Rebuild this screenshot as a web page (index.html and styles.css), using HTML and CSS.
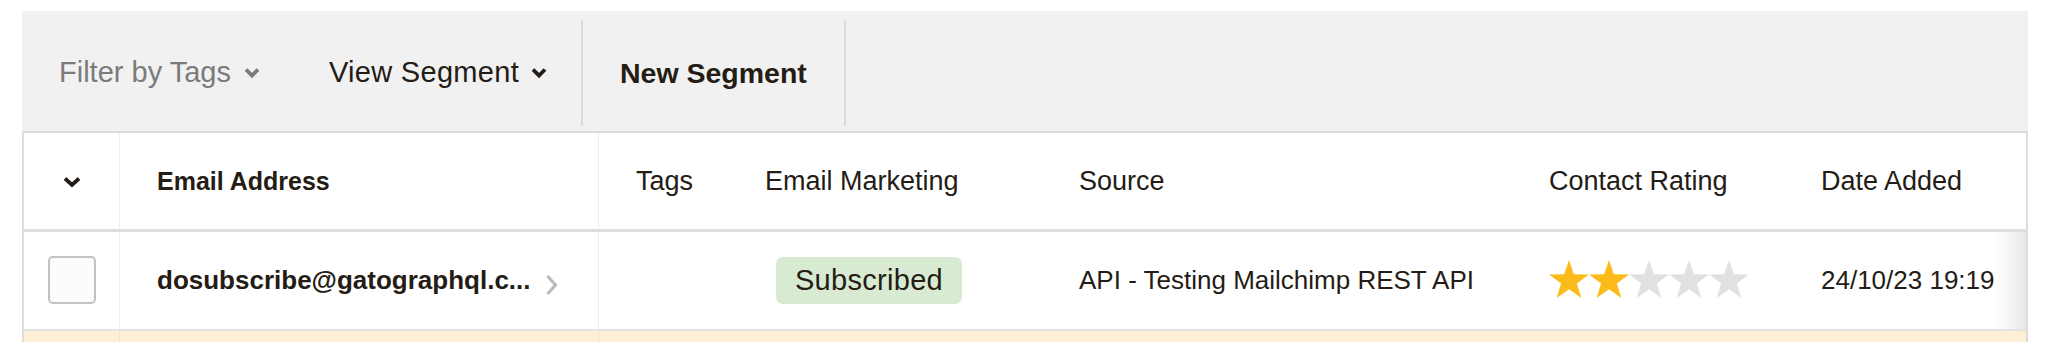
FILE: index.html
```html
<!DOCTYPE html>
<html lang="en">
<head>
<meta charset="utf-8">
<title>Audience</title>
<link rel="stylesheet" href="styles.css">
</head>
<body>
<div class="wrap">
  <div class="toolbar">
    <div class="tb-item tb-filter">
      <span>Filter by Tags</span>
      <svg class="chev" width="16" height="12" viewBox="0 0 16 12"><polyline points="2,2.5 8,8.5 14,2.5" fill="none" stroke="currentColor" stroke-width="3.8"/></svg>
    </div>
    <div class="tb-item tb-view">
      <span>View Segment</span>
      <svg class="chev" width="16" height="12" viewBox="0 0 16 12"><polyline points="2,2.5 8,8.5 14,2.5" fill="none" stroke="currentColor" stroke-width="3.8"/></svg>
    </div>
    <div class="tb-sep"></div>
    <div class="tb-btn">New Segment</div>
    <div class="tb-sep"></div>
  </div>

  <div class="table">
    <div class="row head">
      <div class="cell c-check">
        <svg width="18" height="12" viewBox="0 0 18 12"><polyline points="2,2.5 9,9 16,2.5" fill="none" stroke="#241c15" stroke-width="3.8"/></svg>
      </div>
      <div class="cell c-email"><span class="th-strong">Email Address</span></div>
      <div class="cell">Tags</div>
      <div class="cell">Email Marketing</div>
      <div class="cell">Source</div>
      <div class="cell">Contact Rating</div>
      <div class="cell">Date Added</div>
    </div>

    <div class="row data">
      <div class="cell c-check"><span class="checkbox"></span></div>
      <div class="cell c-email">
        <span class="email">dosubscribe@gatographql.c...</span>
        <svg class="next" width="14" height="22" viewBox="0 0 14 22"><polyline points="2.5,2 10.5,11 2.5,20" fill="none" stroke="#b9b9b9" stroke-width="3"/></svg>
      </div>
      <div class="cell"></div>
      <div class="cell"><span class="badge">Subscribed</span></div>
      <div class="cell c-data">API - Testing Mailchimp REST API</div>
      <div class="cell">
        <div class="stars">
          <svg class="star on" width="40" height="40" viewBox="0 0 40 40"><polygon points="20,0 24.88,14.29 39.97,14.51 27.89,23.56 32.34,37.99 20,29.3 7.66,37.99 12.11,23.56 0.03,14.51 15.12,14.29"/></svg>
          <svg class="star on" width="40" height="40" viewBox="0 0 40 40"><polygon points="20,0 24.88,14.29 39.97,14.51 27.89,23.56 32.34,37.99 20,29.3 7.66,37.99 12.11,23.56 0.03,14.51 15.12,14.29"/></svg>
          <svg class="star" width="40" height="40" viewBox="0 0 40 40"><polygon points="20,0 24.88,14.29 39.97,14.51 27.89,23.56 32.34,37.99 20,29.3 7.66,37.99 12.11,23.56 0.03,14.51 15.12,14.29"/></svg>
          <svg class="star" width="40" height="40" viewBox="0 0 40 40"><polygon points="20,0 24.88,14.29 39.97,14.51 27.89,23.56 32.34,37.99 20,29.3 7.66,37.99 12.11,23.56 0.03,14.51 15.12,14.29"/></svg>
          <svg class="star" width="40" height="40" viewBox="0 0 40 40"><polygon points="20,0 24.88,14.29 39.97,14.51 27.89,23.56 32.34,37.99 20,29.3 7.66,37.99 12.11,23.56 0.03,14.51 15.12,14.29"/></svg>
        </div>
      </div>
      <div class="cell c-data c-last">24/10/23 19:19</div>
    </div>

    <div class="row notice">
      <div class="cell c-check"></div>
      <div class="cell c-email"></div>
      <div class="cell"></div>
      <div class="cell"></div>
      <div class="cell"></div>
      <div class="cell"></div>
      <div class="cell"></div>
    </div>
  </div>
</div>
</body>
</html>
```

FILE: styles.css
```css
* { box-sizing: border-box; }

html, body {
  margin: 0;
  padding: 0;
  background: #ffffff;
  overflow: hidden;
}

body {
  font-family: "Liberation Sans", Arial, sans-serif;
  color: #241c15;
}

.wrap {
  margin: 11px 0 0 22px;
  width: 2006px;
}

/* toolbar */
.toolbar {
  display: flex;
  align-items: center;
  height: 120px;
  background: #f1f1f1;
  font-size: 29px;
}

.tb-item {
  display: flex;
  align-items: center;
  gap: 13px;
  padding-top: 3px;
}

.tb-filter {
  margin-left: 37px;
  color: #7b7b7b;
}

.tb-view {
  margin-left: 69px;
  color: #241c15;
  gap: 12px;
}

.tb-view span { letter-spacing: 0.3px; }

.chev { display: block; margin-top: 1px; }

.tb-sep {
  align-self: stretch;
  margin: 9px 0 5px;
  width: 2px;
  background: #dcdcdc;
}

.tb-view + .tb-sep { margin-left: 34px; }

.tb-btn {
  padding: 4px 37px 0 37px;
  font-size: 28.5px;
  font-weight: bold;
  color: #241c15;
}

/* table */
.table {
  border: 2px solid #dcdcdc;
  border-bottom: none;
  background: #ffffff;
}

.row {
  display: grid;
  grid-template-columns: 96px 479px 129px 314px 470px 272px 1fr;
}

.cell {
  display: flex;
  align-items: center;
  padding-left: 37px;
  font-size: 27px;
  white-space: nowrap;
}

.c-data { font-size: 26px; }

.c-check {
  padding-left: 0;
  justify-content: center;
  border-right: 1px solid #ececec;
}

.c-email {
  border-right: 1px solid #ececec;
}

.head {
  height: 99px;
  border-bottom: 3px solid #dddddd;
}

.head .c-check svg { margin-top: 1px; }

.th-strong {
  font-weight: bold;
  font-size: 25px;
}

.data {
  height: 99px;
  border-bottom: 2px solid #e3e3e3;
}

.checkbox {
  display: block;
  width: 48px;
  height: 48px;
  margin-top: -2px;
  border: 2px solid #c2c2c2;
  border-radius: 5px;
  background: #fcfcfc;
}

.email {
  font-weight: bold;
  font-size: 26px;
}

.next {
  margin-left: 14px;
  margin-top: 8px;
}

.badge {
  display: inline-flex;
  align-items: center;
  justify-content: center;
  margin-left: 11px;
  width: 186px;
  height: 47px;
  border-radius: 7px;
  background: #d8ebd2;
  font-size: 29px;
  letter-spacing: 0.3px;
  color: #241c15;
}

.stars {
  display: flex;
  margin-top: -2px;
}

.star { display: block; fill: #e1e1e1; }
.star.on { fill: #fbbc1b; }

.c-last {
  background: linear-gradient(to right, #ffffff 0, #ffffff calc(100% - 30px), #e7e7e7 100%);
}

.notice {
  height: 40px;
  background: #fdf0d4;
}

.notice .c-check,
.notice .c-email {
  border-right-color: #efe3c7;
}
```
